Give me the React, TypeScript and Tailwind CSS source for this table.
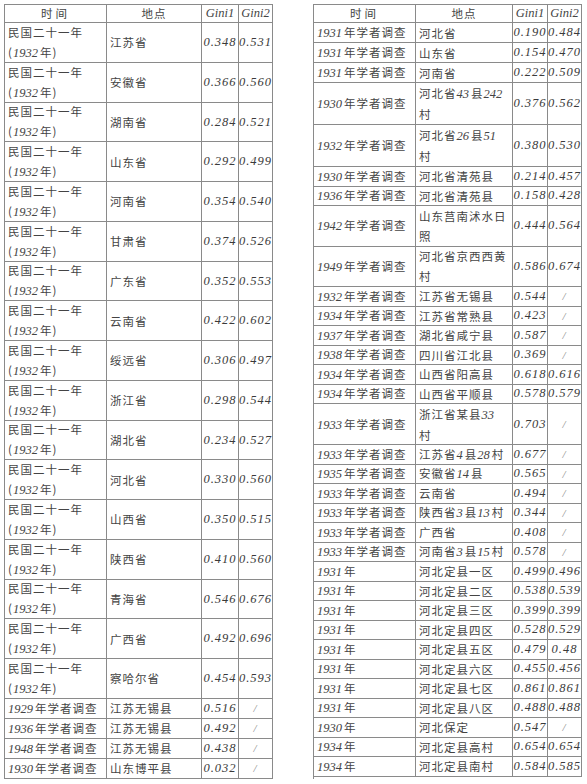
import React from 'react';

type Row = {
  time: string[];
  place: string[];
  g1: string;
  g2: string;
  h: string;
};

const minguo = ['民国二十一年', '(1932年)'];

const leftRows: Row[] = [
  ['江苏省', '0.348', '0.531'],
  ['安徽省', '0.366', '0.560'],
  ['湖南省', '0.284', '0.521'],
  ['山东省', '0.292', '0.499'],
  ['河南省', '0.354', '0.540'],
  ['甘肃省', '0.374', '0.526'],
  ['广东省', '0.352', '0.553'],
  ['云南省', '0.422', '0.602'],
  ['绥远省', '0.306', '0.497'],
  ['浙江省', '0.298', '0.544'],
  ['湖北省', '0.234', '0.527'],
  ['河北省', '0.330', '0.560'],
  ['山西省', '0.350', '0.515'],
  ['陕西省', '0.410', '0.560'],
  ['青海省', '0.546', '0.676'],
  ['广西省', '0.492', '0.696'],
  ['察哈尔省', '0.454', '0.593'],
].map(([p, a, b]) => ({ time: minguo, place: [p], g1: a, g2: b, h: 'h-[39.75px]' }));

const leftSingles: Row[] = [
  ['1929年学者调查', '江苏无锡县', '0.516', '/'],
  ['1936年学者调查', '江苏无锡县', '0.492', '/'],
  ['1948年学者调查', '江苏无锡县', '0.438', '/'],
  ['1930年学者调查', '山东博平县', '0.032', '/'],
].map(([t, p, a, b]) => ({ time: [t], place: [p], g1: a, g2: b, h: 'h-[20px]' }));

const S = 'h-[19.5px]';
const D = 'h-[42px]';

const rightRows: Row[] = [
  { time: ['1931年学者调查'], place: ['河北省'], g1: '0.190', g2: '0.484', h: 'h-[20px]' },
  { time: ['1931年学者调查'], place: ['山东省'], g1: '0.154', g2: '0.470', h: 'h-[20px]' },
  { time: ['1931年学者调查'], place: ['河南省'], g1: '0.222', g2: '0.509', h: 'h-[20px]' },
  { time: ['1930年学者调查'], place: ['河北省43县242', '村'], g1: '0.376', g2: '0.562', h: D },
  { time: ['1932年学者调查'], place: ['河北省26县51', '村'], g1: '0.380', g2: '0.530', h: D },
  { time: ['1930年学者调查'], place: ['河北省清苑县'], g1: '0.214', g2: '0.457', h: S },
  { time: ['1936年学者调查'], place: ['河北省清苑县'], g1: '0.158', g2: '0.428', h: S },
  { time: ['1942年学者调查'], place: ['山东莒南沭水日', '照'], g1: '0.444', g2: '0.564', h: 'h-[40.5px]' },
  { time: ['1949年学者调查'], place: ['河北省京西西黄', '村'], g1: '0.586', g2: '0.674', h: 'h-[40.5px]' },
  { time: ['1932年学者调查'], place: ['江苏省无锡县'], g1: '0.544', g2: '/', h: S },
  { time: ['1934年学者调查'], place: ['江苏省常熟县'], g1: '0.423', g2: '/', h: S },
  { time: ['1937年学者调查'], place: ['湖北省咸宁县'], g1: '0.587', g2: '/', h: S },
  { time: ['1938年学者调查'], place: ['四川省江北县'], g1: '0.369', g2: '/', h: S },
  { time: ['1934年学者调查'], place: ['山西省阳高县'], g1: '0.618', g2: '0.616', h: S },
  { time: ['1934年学者调查'], place: ['山西省平顺县'], g1: '0.578', g2: '0.579', h: S },
  { time: ['1933年学者调查'], place: ['浙江省某县33', '村'], g1: '0.703', g2: '/', h: 'h-[41px]' },
  { time: ['1933年学者调查'], place: ['江苏省4县28村'], g1: '0.677', g2: '/', h: S },
  { time: ['1935年学者调查'], place: ['安徽省14县'], g1: '0.565', g2: '/', h: S },
  { time: ['1933年学者调查'], place: ['云南省'], g1: '0.494', g2: '/', h: S },
  { time: ['1933年学者调查'], place: ['陕西省3县13村'], g1: '0.344', g2: '/', h: S },
  { time: ['1933年学者调查'], place: ['广西省'], g1: '0.408', g2: '/', h: S },
  { time: ['1933年学者调查'], place: ['河南省3县15村'], g1: '0.578', g2: '/', h: S },
  { time: ['1931年'], place: ['河北定县一区'], g1: '0.499', g2: '0.496', h: S },
  { time: ['1931年'], place: ['河北定县二区'], g1: '0.538', g2: '0.539', h: S },
  { time: ['1931年'], place: ['河北定县三区'], g1: '0.399', g2: '0.399', h: S },
  { time: ['1931年'], place: ['河北定县四区'], g1: '0.528', g2: '0.529', h: S },
  { time: ['1931年'], place: ['河北定县五区'], g1: '0.479', g2: '0.48', h: S },
  { time: ['1931年'], place: ['河北定县六区'], g1: '0.455', g2: '0.456', h: S },
  { time: ['1931年'], place: ['河北定县七区'], g1: '0.861', g2: '0.861', h: S },
  { time: ['1931年'], place: ['河北定县八区'], g1: '0.488', g2: '0.488', h: S },
  { time: ['1930年'], place: ['河北保定'], g1: '0.547', g2: '/', h: S },
  { time: ['1934年'], place: ['河北定县高村'], g1: '0.654', g2: '0.654', h: S },
  { time: ['1934年'], place: ['河北定县南村'], g1: '0.584', g2: '0.585', h: S },
];

// digits go in italic serif, the rest stays in the CJK face
const Mixed = ({ text }: { text: string }) => (
  <>
    {text.split(/([0-9.]+)/).map((part, i) =>
      /^[0-9.]+$/.test(part) ? (
        <span key={i} className="font-['Liberation_Serif',serif] italic text-[12.5px] tracking-normal pr-[2px]">
          {part}
        </span>
      ) : (
        <span key={i}>{part}</span>
      )
    )}
  </>
);

const Num = ({ v }: { v: string }) =>
  v === '/' ? (
    <span className="font-['Liberation_Serif',serif] italic text-[11px] text-[#888]">/</span>
  ) : (
    <span className="font-['Liberation_Serif',serif] italic text-[12.5px] text-[#3a3a3a]">{v}</span>
  );

const cell = 'border-r border-b border-[#8a8a8a] flex items-center overflow-hidden';

const Table = ({ rows, cols }: { rows: Row[]; cols: string }) => (
  <div className="border-l border-t border-[#8a8a8a] w-[269px]">
    <div className={`grid ${cols} h-[18px]`}>
      <div className={`${cell} justify-center tracking-[3px]`}>时间</div>
      <div className={`${cell} justify-center`}>地点</div>
      <div className={`${cell} justify-center`}>
        <span className="font-['Liberation_Serif',serif] italic text-[12.5px] tracking-normal">Gini1</span>
      </div>
      <div className={`${cell} justify-center`}>
        <span className="font-['Liberation_Serif',serif] italic text-[12.5px] tracking-normal">Gini2</span>
      </div>
    </div>
    {rows.map((r, i) => (
      <div key={i} className={`grid ${cols} ${r.h}`}>
        <div className={`${cell} px-[3px]`}>
          <div className="leading-[20px] whitespace-nowrap">
            {r.time.map((t, j) => (
              <div key={j}>
                <Mixed text={t} />
              </div>
            ))}
          </div>
        </div>
        <div className={`${cell} px-[3px]`}>
          <div className="leading-[20px] whitespace-nowrap">
            {r.place.map((t, j) => (
              <div key={j}>
                <Mixed text={t} />
              </div>
            ))}
          </div>
        </div>
        <div className={`${cell} justify-center`}>
          <Num v={r.g1} />
        </div>
        <div className={`${cell} justify-center`}>
          <Num v={r.g2} />
        </div>
      </div>
    ))}
  </div>
);

export default function App() {
  return (
    <div className="w-[587px] h-[784px] bg-white overflow-hidden font-['Noto_Sans_CJK_SC',sans-serif] text-[11.5px] tracking-[1px] text-[#444]">
      <div className="flex gap-[40px] pl-[4px] pt-[4px]">
        <Table rows={[...leftRows, ...leftSingles]} cols="grid-cols-[102px_95px_37px_34px]" />
        <Table rows={rightRows} cols="grid-cols-[102px_97px_35px_34px]" />
      </div>
    </div>
  );
}
